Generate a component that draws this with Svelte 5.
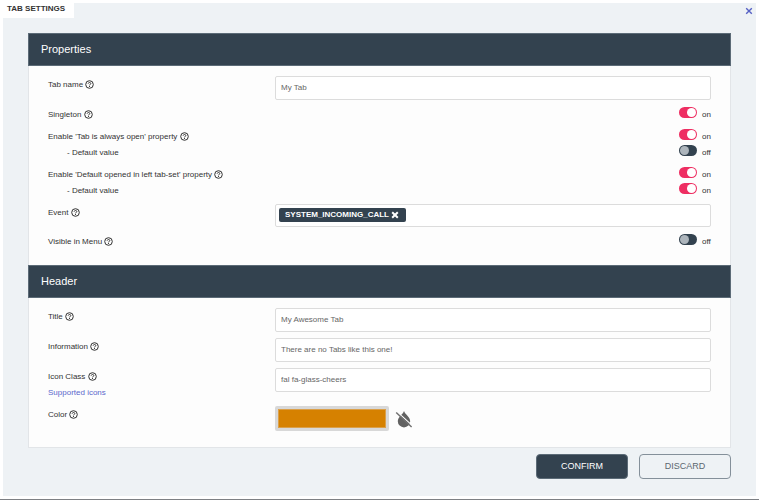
<script lang="ts">
  let tabName = $state('My Tab');
  let title = $state('My Awesome Tab');
  let information = $state('There are no Tabs like this one!');
  let iconClass = $state('fal fa-glass-cheers');
  let color = $state('#d68100');
  let events = $state(['SYSTEM_INCOMING_CALL']);

  let singleton = $state(true);
  let alwaysOpen = $state(true);
  let alwaysOpenDefault = $state(false);
  let leftTabSet = $state(true);
  let leftTabSetDefault = $state(true);
  let visibleInMenu = $state(false);

  function removeEvent(name: string) {
    events = events.filter((event) => event !== name);
  }
</script>

{#snippet help()}
  <svg class="help" viewBox="0 0 18 18" aria-hidden="true">
    <circle cx="9" cy="9" r="7.6" />
    <path d="M6.4 7.4C6.4 4.2 11.6 4.2 11.6 7.1C11.6 9 9 8.8 9 10.8M9 12V13.9" />
  </svg>
{/snippet}

{#snippet toggle(id: string, checked: boolean, change: (value: boolean) => void)}
  <span class="toggle">
    <input {id} type="checkbox" role="switch" {checked} onchange={(e) => change(e.currentTarget.checked)} />
    <span class="toggle__state">{checked ? 'on' : 'off'}</span>
  </span>
{/snippet}

<main class="page">
  <div class="panel">
    <header class="panel__header">
      <h1>TAB SETTINGS</h1>
      <button class="close" type="button" aria-label="Close">
        <svg viewBox="0 0 8 8" aria-hidden="true"><path d="M1.2 1.2L6.8 6.8M6.8 1.2L1.2 6.8" /></svg>
      </button>
    </header>

    <form class="content" onsubmit={(e) => e.preventDefault()}>
      <div class="card">
        <h2>Properties</h2>
        <section class="rows">
          <div class="row">
            <label for="tab-name">Tab name {@render help()}</label>
            <input class="text" id="tab-name" type="text" bind:value={tabName} />
          </div>

          <div class="row">
            <label for="singleton">Singleton {@render help()}</label>
            {@render toggle('singleton', singleton, (v) => (singleton = v))}
          </div>

          <div class="group">
            <div class="row">
              <label for="always-open">Enable 'Tab is always open' property {@render help()}</label>
              {@render toggle('always-open', alwaysOpen, (v) => (alwaysOpen = v))}
            </div>
            <div class="row">
              <label class="sub" for="always-open-default">- Default value</label>
              {@render toggle('always-open-default', alwaysOpenDefault, (v) => (alwaysOpenDefault = v))}
            </div>
          </div>

          <div class="group">
            <div class="row">
              <label for="left-set">Enable 'Default opened in left tab-set' property {@render help()}</label>
              {@render toggle('left-set', leftTabSet, (v) => (leftTabSet = v))}
            </div>
            <div class="row">
              <label class="sub" for="left-set-default">- Default value</label>
              {@render toggle('left-set-default', leftTabSetDefault, (v) => (leftTabSetDefault = v))}
            </div>
          </div>

          <div class="row">
            <span id="event-label" class="label">Event {@render help()}</span>
            <div class="tags" role="group" aria-labelledby="event-label">
              {#each events as event}
                <span class="tag">
                  {event}
                  <button type="button" aria-label={`Remove ${event}`} onclick={() => removeEvent(event)}>
                    <svg viewBox="0 0 8 8" aria-hidden="true"><path d="M1.2 1.2L6.8 6.8M6.8 1.2L1.2 6.8" /></svg>
                  </button>
                </span>
              {/each}
            </div>
          </div>

          <div class="row">
            <label for="visible">Visible in Menu {@render help()}</label>
            {@render toggle('visible', visibleInMenu, (v) => (visibleInMenu = v))}
          </div>
        </section>

        <h2>Header</h2>
        <section class="rows">
          <div class="row">
            <label for="title">Title {@render help()}</label>
            <input class="text" id="title" type="text" bind:value={title} />
          </div>

          <div class="row">
            <label for="information">Information {@render help()}</label>
            <input class="text" id="information" type="text" bind:value={information} />
          </div>

          <div class="row">
            <div>
              <label for="icon-class">Icon Class {@render help()}</label>
              <a href="#icons">Supported icons</a>
            </div>
            <input class="text" id="icon-class" type="text" bind:value={iconClass} />
          </div>

          <div class="row">
            <label for="color">Color {@render help()}</label>
            <div class="color">
              <input id="color" type="color" bind:value={color} />
              <button class="clear" type="button" aria-label="Clear color">
                <svg viewBox="0 0 18 18" aria-hidden="true">
                  <path class="drop" d="M9 1C8 4.4 2.8 7 2.8 11.2A6.2 6.2 0 0 0 15.2 11.2C15.2 7 10 4.4 9 1Z" />
                  <path class="gap" d="M2 1.6L17.4 15.6" />
                  <path class="slash" d="M1.2 2.4L16.6 17" />
                </svg>
              </button>
            </div>
          </div>
        </section>
      </div>

      <footer class="actions">
        <button class="btn btn--primary" type="submit">CONFIRM</button>
        <button class="btn" type="button">DISCARD</button>
      </footer>
    </form>
  </div>
</main>

<style>
  :global(body) {
    background: #fff;
  }

  .page {
    box-sizing: border-box;
    padding: 3px;
    border-bottom: 1px solid #7d8084;
    font-family: 'Liberation Sans', Arial, sans-serif;
    font-size: 8px;
    line-height: 18px;
    color: #333;
  }

  .panel {
    background: #eef2f5;
    padding-bottom: 17px;
  }

  .panel__header {
    display: flex;
    justify-content: space-between;
    align-items: flex-start;
    height: 30px;
  }

  h1 {
    margin: 0;
    padding: 0 9px 3px 4px;
    background: #fff;
    font-size: 8px;
    line-height: 12px;
    color: #333;
  }

  button {
    font-family: inherit;
    cursor: pointer;
  }

  .close {
    margin: 4px 3px 0 0;
    padding: 0;
    border: 0;
    background: none;
    display: flex;
  }

  .close svg {
    width: 8px;
    height: 8px;
    stroke: #5560c4;
    stroke-width: 1.4;
  }

  .content {
    margin: 0 25px;
  }

  .card {
    border: 1px solid #e2e5e8;
    border-top: 0;
    background: #fdfdfd;
  }

  h2 {
    box-sizing: border-box;
    margin: 0 -1px;
    padding: 0 12px;
    height: 33px;
    border: 1px solid #5c6b77;
    background: #33424f;
    color: #fff;
    font-size: 11px;
    font-weight: 400;
    line-height: 31px;
  }

  .rows {
    display: grid;
    gap: 6px;
    padding: 10px 19px 16px;
  }

  .row {
    display: grid;
    grid-template-columns: 227px 1fr;
    align-items: start;
  }

  label,
  .label,
  a {
    display: block;
    height: 16px;
    white-space: nowrap;
  }

  .sub {
    padding-left: 19px;
  }

  .help {
    width: 9px;
    height: 9px;
    vertical-align: -2px;
    fill: none;
    stroke: #333;
    stroke-width: 2;
  }

  a {
    color: #5c68cc;
    text-decoration: none;
  }

  .text,
  .tags {
    box-sizing: border-box;
    width: 100%;
    height: 24px;
    border: 1px solid #dcdcdc;
    border-radius: 2px;
    background: #fff;
  }

  .text {
    padding: 0 5px 1px;
    font: inherit;
    color: #666;
  }

  .tags {
    height: 23px;
    padding: 3px;
    display: flex;
    gap: 4px;
  }

  .tag {
    display: flex;
    align-items: center;
    gap: 2px;
    height: 14px;
    padding: 0 7px 0 6px;
    border-radius: 2px;
    background: #33424f;
    color: #fff;
    font-weight: 700;
  }

  .tag button {
    display: flex;
    padding: 0;
    border: 0;
    background: none;
  }

  .tag svg {
    width: 8px;
    height: 8px;
    stroke: #fff;
    stroke-width: 2;
  }

  .toggle {
    justify-self: end;
    display: flex;
    align-items: flex-start;
    gap: 5px;
    width: 32px;
    height: 16px;
  }

  .toggle input {
    appearance: none;
    flex: none;
    box-sizing: border-box;
    width: 18px;
    height: 11px;
    margin: 1px 0 0;
    padding: 1px;
    border-radius: 6px;
    background: #33424f;
    display: flex;
  }

  .toggle input::before {
    content: '';
    width: 9px;
    height: 9px;
    border-radius: 50%;
    background: #adb5bc;
  }

  .toggle input:checked {
    justify-content: flex-end;
    background: #ee2e62;
  }

  .toggle input:checked::before {
    background: #fff;
  }

  .color {
    display: flex;
    align-items: center;
    gap: 6px;
  }

  .color input {
    box-sizing: border-box;
    width: 114px;
    height: 25px;
    padding: 0;
    border: 3px solid #d8d8d8;
    border-radius: 2px;
    background: #d8d8d8;
  }

  .color input::-webkit-color-swatch-wrapper {
    padding: 0;
  }

  .color input::-webkit-color-swatch {
    border: 1px solid #dba04a;
  }

  .clear {
    display: flex;
    padding: 0;
    border: 0;
    background: none;
  }

  .clear svg {
    width: 18px;
    height: 18px;
  }

  .drop {
    fill: #626262;
  }

  .gap {
    stroke: #fdfdfd;
    stroke-width: 1.2;
  }

  .slash {
    stroke: #707070;
    stroke-width: 1.4;
  }

  .actions {
    display: flex;
    justify-content: flex-end;
    gap: 11px;
    padding-top: 6px;
  }

  .btn {
    box-sizing: border-box;
    width: 92px;
    height: 25px;
    padding: 0 0 1px;
    border: 1px solid #84909a;
    border-radius: 4px;
    background: transparent;
    color: #5b6770;
    font-size: 9px;
  }

  .btn--primary {
    border-color: #5c6b77;
    background: #33424f;
    color: #fff;
  }
</style>
